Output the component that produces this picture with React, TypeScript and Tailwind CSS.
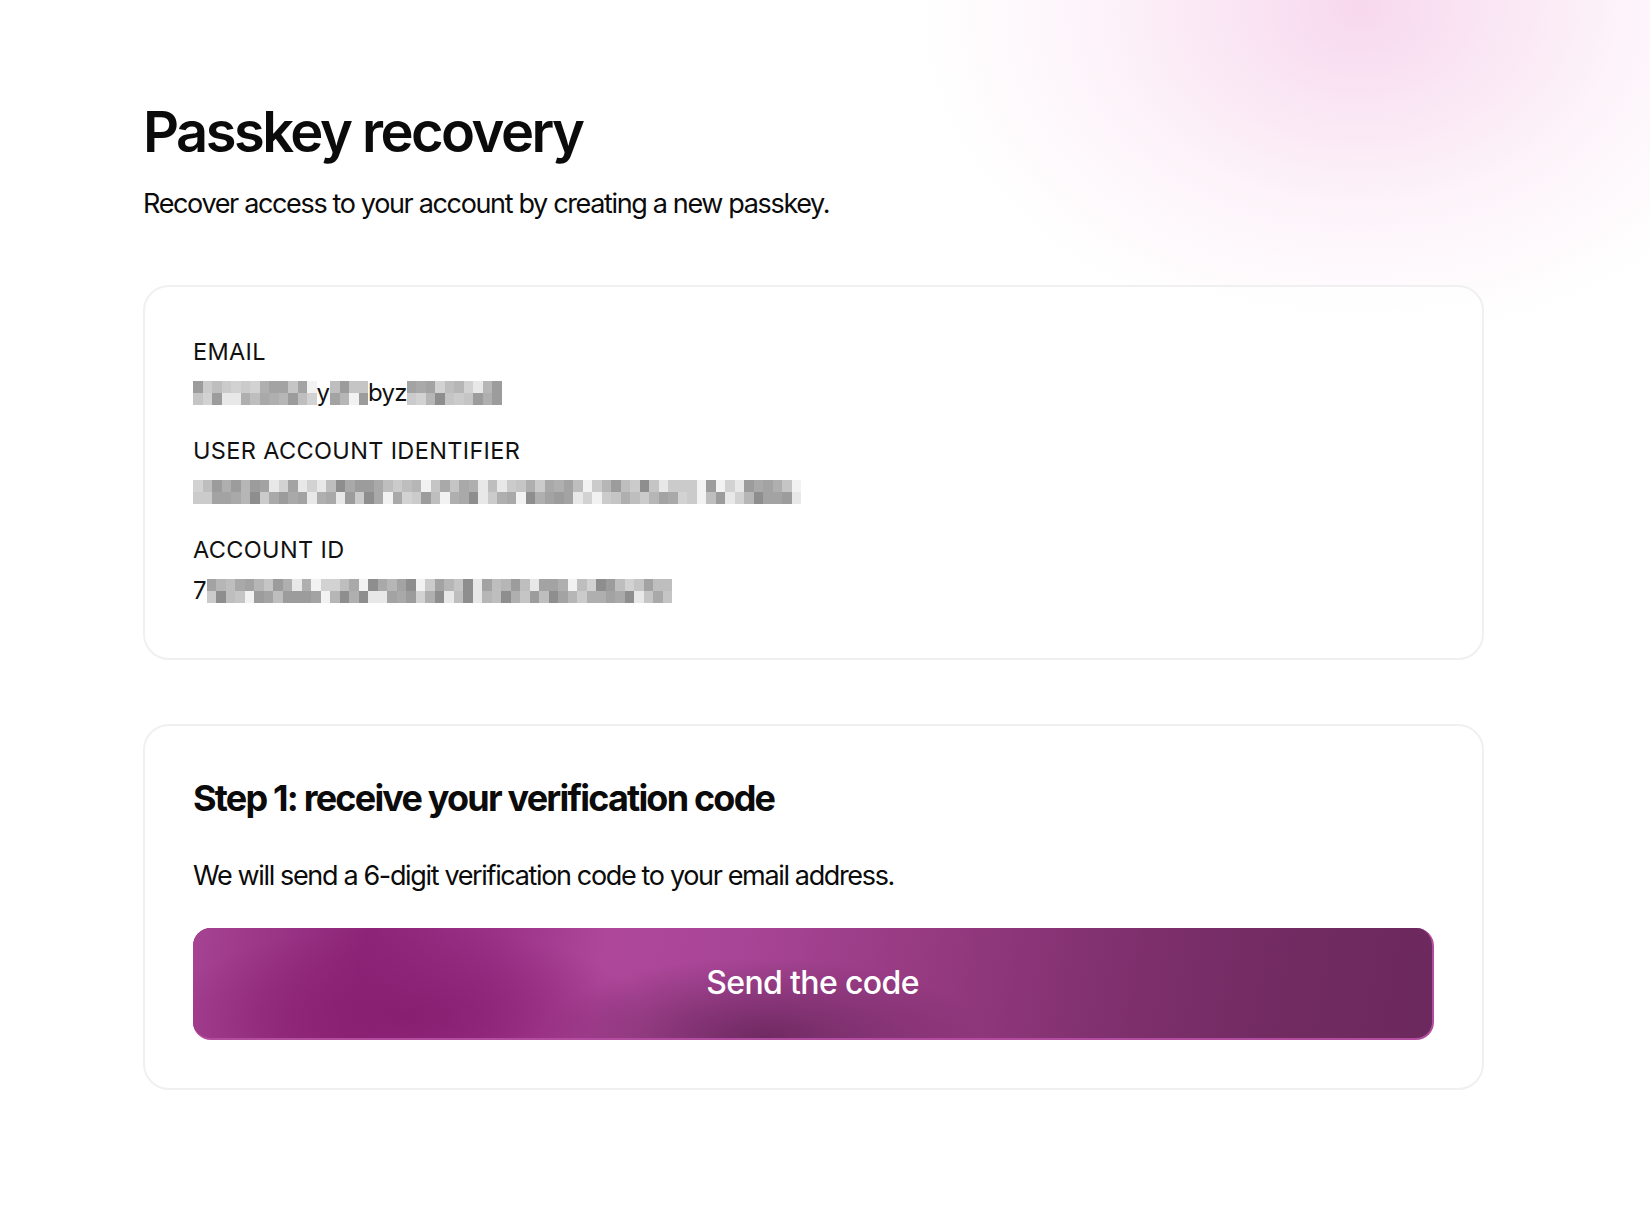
import React from "react";

// grays used for the redacted (pixelated) values
const shades = ["#a9a9a9", "#b6b6b6", "#c5c5c5", "#9c9c9c", "#d2d2d2", "#e8e8e8", "#8e8e8e", "#bebebe", "#afafaf", "#f2f2f2", "#a3a3a3", "#cbcbcb"];

function makeCells(count: number, seed: number) {
  let s = seed;
  const next = () => {
    s = (s * 9301 + 49297) % 233280;
    return s / 233280;
  };
  return Array.from({ length: count }, () => [
    shades[Math.floor(next() * shades.length)],
    shades[Math.floor(next() * shades.length)],
  ]);
}

function Pixels({ count, seed }: { count: number; seed: number }) {
  const cells = makeCells(count, seed);
  return (
    <div className="flex h-6">
      {cells.map((c, i) => (
        <div key={i} className="flex flex-col w-[9.5px]">
          <div className="h-3" style={{ backgroundColor: c[0] }} />
          <div className="h-3" style={{ backgroundColor: c[1] }} />
        </div>
      ))}
    </div>
  );
}

function Field({ label, children }: { label: string; children: React.ReactNode }) {
  return (
    <div className="flex flex-col">
      <div className="text-[23.5px] leading-[28px] text-[#111] tracking-[0.015em]">{label}</div>
      <div className="mt-[15px] flex items-end h-6 text-[24px] leading-6 text-[#111]">{children}</div>
    </div>
  );
}

export default function App() {
  return (
    <div className="min-h-screen w-full bg-white bg-[radial-gradient(ellipse_440px_330px_at_1360px_10px,#f7d8ee_0%,#fae6f4_30%,#fdf4fa_62%,#ffffff_100%)] font-['Inter',sans-serif] text-[#0b0b0b]">
      <div className="pl-[143px] pt-[102px] pb-[140px] w-[1484px]">
        <h1 className="text-[56px] leading-[1.1] font-semibold tracking-[-0.045em]">Passkey recovery</h1>
        <p className="mt-6 text-[27px] leading-8 tracking-[-0.05em]">
          Recover access to your account by creating a new passkey.
        </p>

        {/* account details */}
        <div className="mt-[65px] rounded-[26px] border-2 border-[#f0f0f0] bg-white/80 pl-12 pr-12 pt-[51px] pb-[55px] flex flex-col gap-8">
          <Field label="EMAIL">
            <Pixels count={13} seed={3} />
            <span className="leading-6 -mt-1">y</span>
            <Pixels count={4} seed={11} />
            <span className="leading-6 -mt-1 tracking-[-0.03em]">byz</span>
            <Pixels count={10} seed={17} />
          </Field>
          <Field label="USER ACCOUNT IDENTIFIER">
            <Pixels count={64} seed={29} />
          </Field>
          <Field label="ACCOUNT ID">
            <span className="leading-6 -mt-1">7</span>
            <Pixels count={49} seed={41} />
          </Field>
        </div>

        {/* step 1 */}
        <div className="mt-[64px] rounded-[26px] border-2 border-[#f0f0f0] bg-white px-12 pt-[50px] pb-[48px]">
          <h2 className="text-[36px] leading-[44px] font-bold tracking-[-0.05em]">Step 1: receive your verification code</h2>
          <p className="mt-10 text-[27px] leading-8 tracking-[-0.05em]">
            We will send a 6-digit verification code to your email address.
          </p>
          <button
            type="button"
            className="mt-9 w-full h-[112px] rounded-[18px] border-b-2 border-r-2 border-[#b24c9f] bg-[#8b2674] bg-[radial-gradient(ellipse_220px_80px_at_46%_100%,rgba(108,40,95,0.95),rgba(108,40,95,0)),radial-gradient(ellipse_240px_90px_at_17%_80%,#891f71,rgba(137,31,113,0)),linear-gradient(100deg,#a64393_0%,#8d2477_14%,#9a3187_24%,#ae479a_33%,#a84596_44%,#94397f_60%,#7d2f6c_76%,#712b61_88%,#6c295d_100%)] text-white text-[32px] font-medium tracking-[-0.02em]"
          >
            Send the code
          </button>
        </div>
      </div>
    </div>
  );
}
